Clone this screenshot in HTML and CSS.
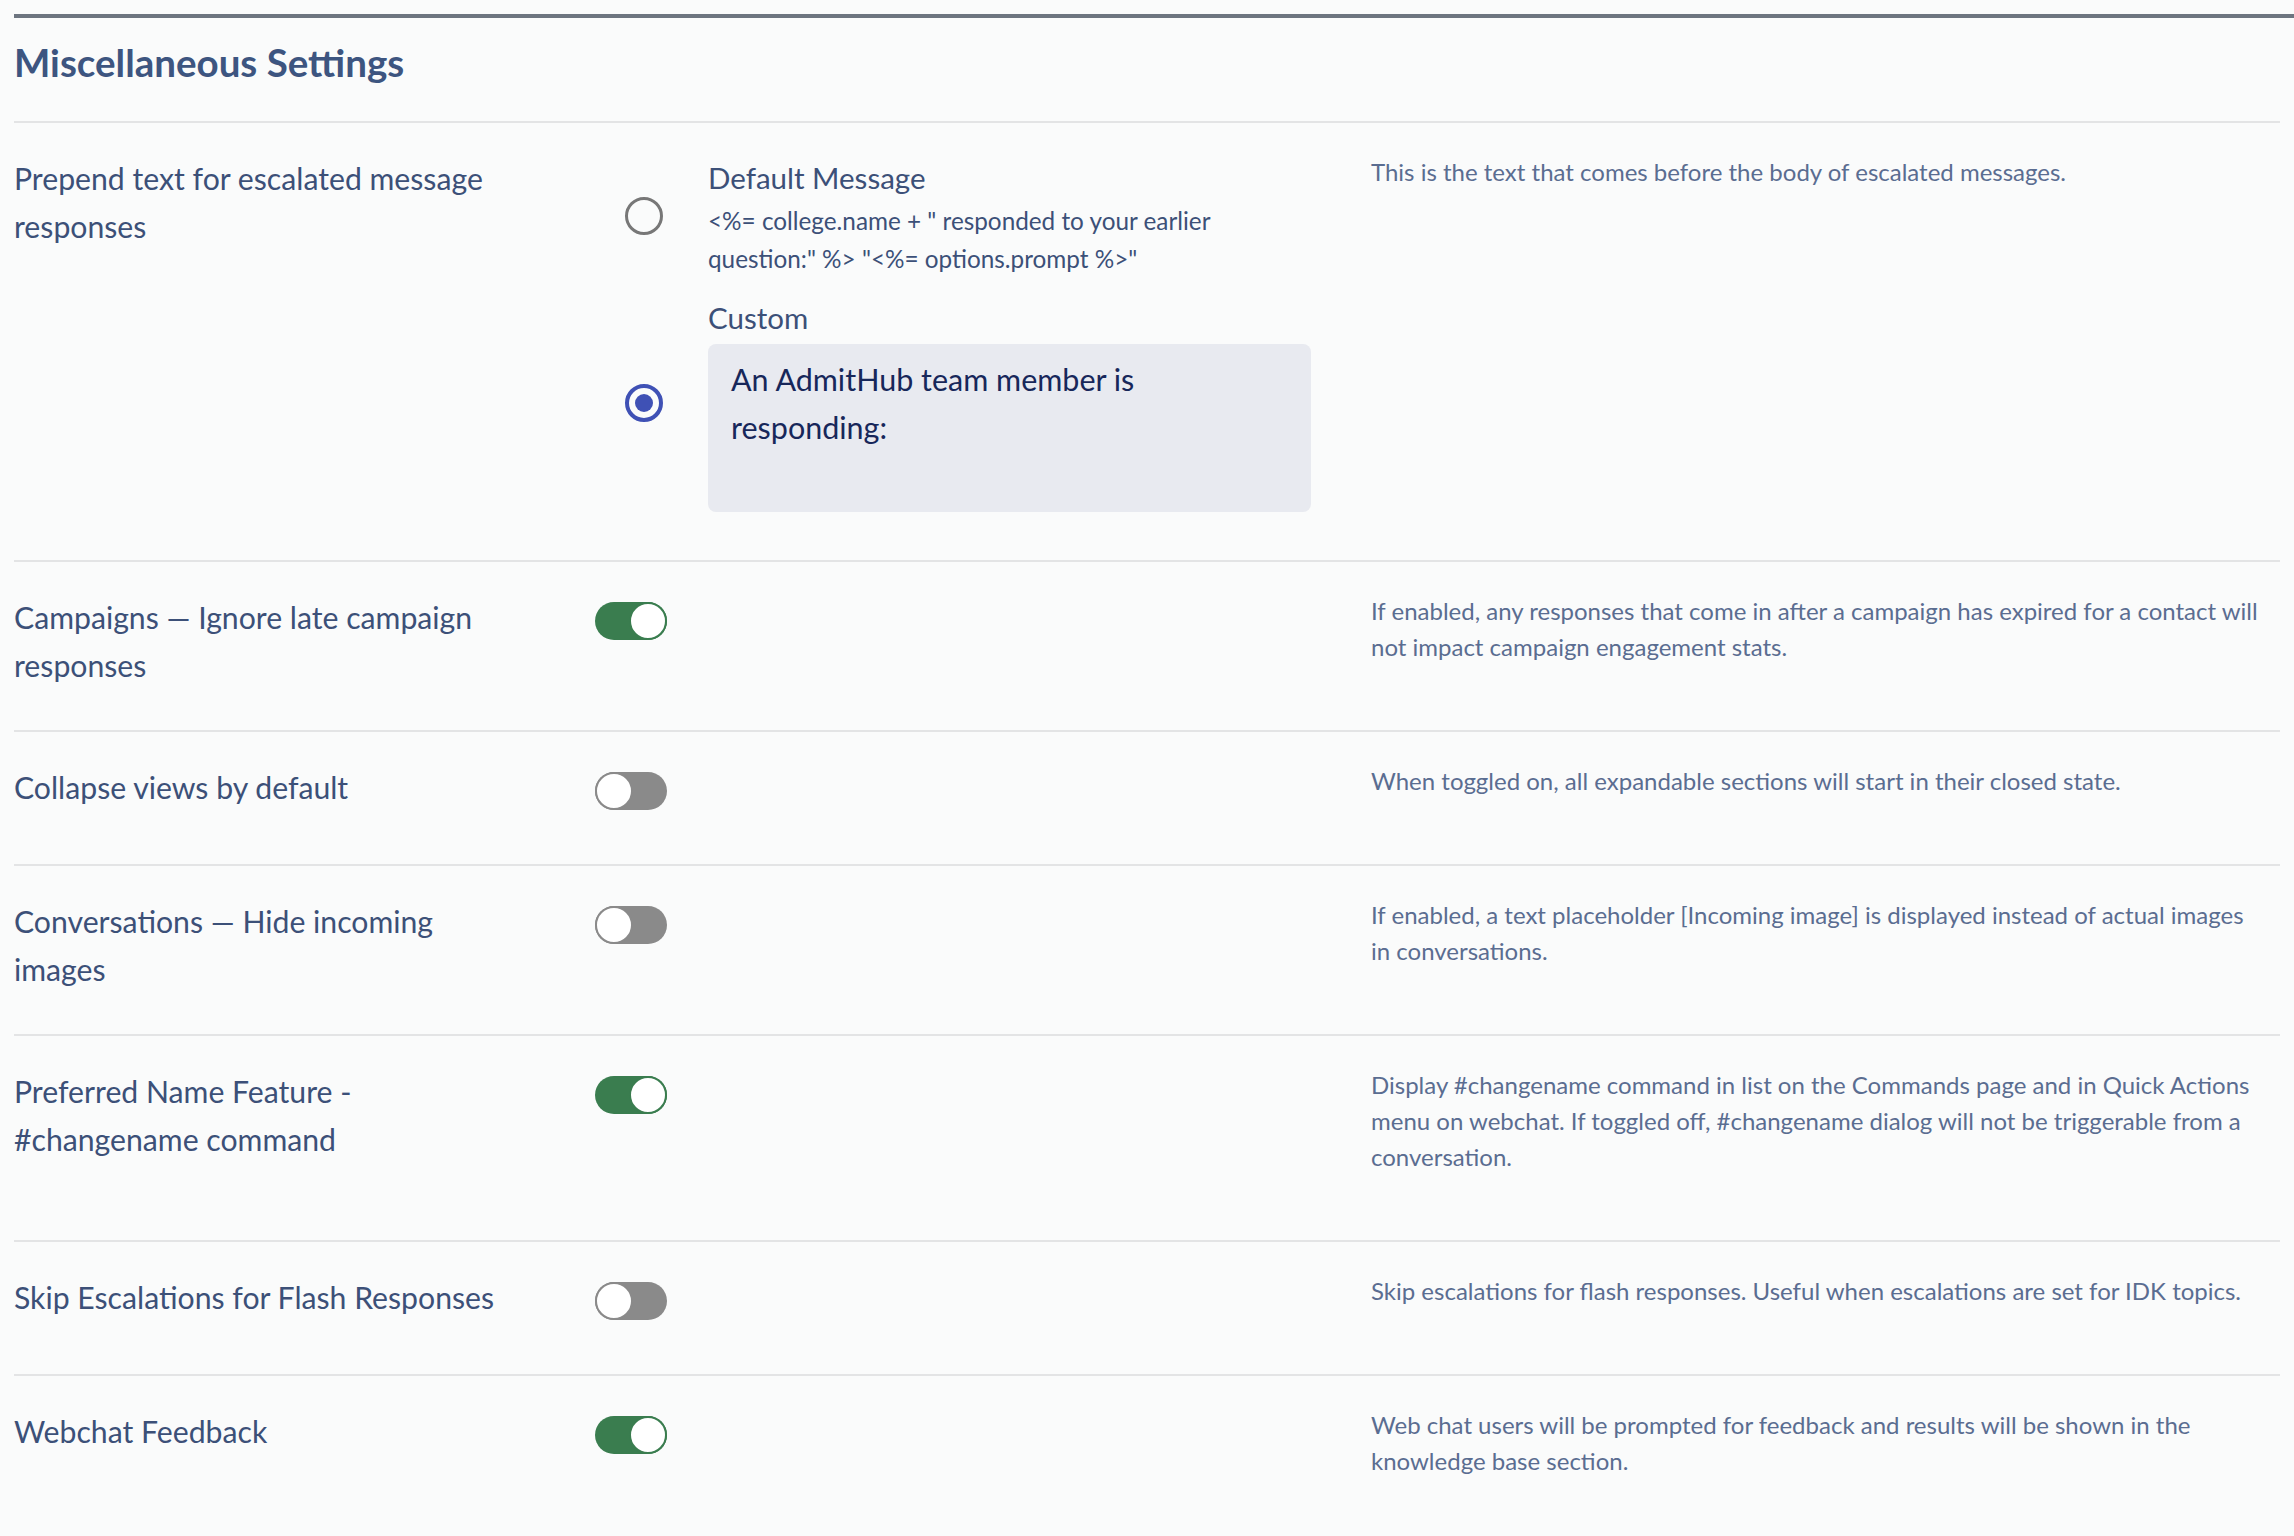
FILE: index.html
```html
<!DOCTYPE html>
<html lang="en">
  <head>
    <meta charset="utf-8">
    <title>Miscellaneous Settings</title>
    <link rel="stylesheet" href="styles.css">
  </head>

  <body>
    <section class="settings">
      <h2 class="settings-title">Miscellaneous Settings</h2>

      <div class="setting-row">
        <div class="setting-label">Prepend text for escalated message responses</div>
        <div class="setting-control radio-group">
          <label class="radio-option">
            <span class="radio"></span>
            <div class="radio-body">
              <div class="radio-label">Default Message</div>
              <div class="radio-code">&lt;%= college.name + " responded to your earlier question:" %&gt; "&lt;%= options.prompt %&gt;"</div>
            </div>
          </label>
          <label class="radio-option">
            <span class="radio checked"></span>
            <div class="radio-body">
              <div class="radio-label">Custom</div>
              <div class="textbox">An AdmitHub team member is responding:</div>
            </div>
          </label>
        </div>
        <p class="setting-desc">This is the text that comes before the body of escalated messages.</p>
      </div>

      <div class="setting-row">
        <div class="setting-label">Campaigns — Ignore late campaign responses</div>
        <div class="setting-control"><span class="toggle on"><span class="knob"></span></span></div>
        <p class="setting-desc">If enabled, any responses that come in after a campaign has expired for a contact will not impact campaign engagement stats.</p>
      </div>

      <div class="setting-row">
        <div class="setting-label">Collapse views by default</div>
        <div class="setting-control"><span class="toggle"><span class="knob"></span></span></div>
        <p class="setting-desc">When toggled on, all expandable sections will start in their closed state.</p>
      </div>

      <div class="setting-row">
        <div class="setting-label">Conversations — Hide incoming images</div>
        <div class="setting-control"><span class="toggle"><span class="knob"></span></span></div>
        <p class="setting-desc">If enabled, a text placeholder [Incoming image] is displayed instead of actual images in conversations.</p>
      </div>

      <div class="setting-row">
        <div class="setting-label">Preferred Name Feature - #changename command</div>
        <div class="setting-control"><span class="toggle on"><span class="knob"></span></span></div>
        <p class="setting-desc">Display #changename command in list on the Commands page and in Quick Actions menu on webchat. If toggled off, #changename dialog will not be triggerable from a conversation.</p>
      </div>

      <div class="setting-row">
        <div class="setting-label">Skip Escalations for Flash Responses</div>
        <div class="setting-control"><span class="toggle"><span class="knob"></span></span></div>
        <p class="setting-desc">Skip escalations for flash responses. Useful when escalations are set for IDK topics.</p>
      </div>

      <div class="setting-row">
        <div class="setting-label">Webchat Feedback</div>
        <div class="setting-control"><span class="toggle on"><span class="knob"></span></span></div>
        <p class="setting-desc">Web chat users will be prompted for feedback and results will be shown in the knowledge base section.</p>
      </div>
    </section>
  </body>
</html>
```

FILE: styles.css
```css
body {
  margin: 0;
  background: #fafbfb;
  font-family: Lato, "Noto Sans", sans-serif;
  color: #3c5078;
}

.settings {
  margin: 14px 0 0 14px;
  border-top: 4px solid #6d7580;
}

.settings-title {
  margin: 0 14px 0 0;
  padding: 20px 0 35px;
  font-size: 38.5px;
  line-height: 48px;
  font-weight: 700;
  color: #3d5580;
}

.setting-row {
  margin-right: 14px;
  padding: 31px 0 39px;
  border-top: 2px solid #e3e4e5;
  display: grid;
  grid-template-columns: 581px 776px 1fr;
}

.setting-label {
  font-size: 30.2px;
  line-height: 48px;
  padding-right: 66px;
}

.setting-desc {
  max-width: 892px;
  margin: 0 0 26px;
  font-size: 24px;
  line-height: 36px;
  color: #5a6d91;
}

/* radio group */
.radio-group {
  padding-bottom: 9px;
}

.radio-option {
  display: flex;
  align-items: center;
  padding-left: 30px;
}

.radio-option + .radio-option {
  margin-top: 16px;
}

.radio {
  width: 38px;
  height: 38px;
  box-sizing: border-box;
  border: 3px solid #777;
  border-radius: 50%;
  margin-right: 45px;
  flex: none;
  display: flex;
  align-items: center;
  justify-content: center;
}

.radio.checked {
  border: 4px solid #3f51b5;
}

.radio.checked::after {
  content: "";
  width: 18px;
  height: 18px;
  border-radius: 50%;
  background: #3f51b5;
}

.radio-body {
  width: 603px;
}

.radio-label {
  font-size: 29.5px;
  line-height: 48px;
}

.radio-code {
  font-size: 24.3px;
  line-height: 38px;
  padding-right: 60px;
}

.textbox {
  height: 168px;
  box-sizing: border-box;
  margin-top: 2px;
  padding: 11px 90px 0 23px;
  background: #e8eaf0;
  border-radius: 8px;
  font-size: 30.5px;
  line-height: 48px;
  color: #17275a;
}

/* toggles */
.toggle {
  display: flex;
  justify-content: flex-start;
  width: 72px;
  height: 38px;
  margin-top: 9px;
  border-radius: 19px;
  background: #8a8a8a;
}

.toggle.on {
  justify-content: flex-end;
  background: #3a7d4f;
}

.knob {
  width: 38px;
  height: 38px;
  box-sizing: border-box;
  border: 2px solid #8a8a8a;
  border-radius: 50%;
  background: #fff;
}

.toggle.on .knob {
  border-color: #3a7d4f;
}
```
